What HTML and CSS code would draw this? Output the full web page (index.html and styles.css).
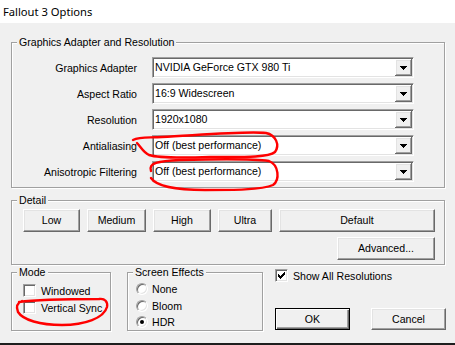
FILE: index.html
```html
<!DOCTYPE html>
<html>
<head>
<meta charset="utf-8">
<title>Fallout 3 Options</title>
<link rel="stylesheet" href="styles.css">
</head>
<body>
<div class="window">
  <div class="titlebar">Fallout 3 Options</div>
  <div class="client">
    <fieldset class="group gfx">
      <legend>Graphics Adapter and Resolution</legend>
      <div class="form">
        <div class="lbl">Graphics Adapter</div>
        <div class="combo focus"><span class="val">NVIDIA GeForce GTX 980 Ti</span><span class="drop"><svg width="7" height="4" viewBox="0 0 7 4"><path d="M0 0h7v1h-1v1h-1v1h-1v1h-1v-1h-1v-1h-1v-1h-1z" fill="#000"/></svg></span></div>
        <div class="lbl">Aspect Ratio</div>
        <div class="combo"><span class="val">16:9 Widescreen</span><span class="drop"><svg width="7" height="4" viewBox="0 0 7 4"><path d="M0 0h7v1h-1v1h-1v1h-1v1h-1v-1h-1v-1h-1v-1h-1z" fill="#000"/></svg></span></div>
        <div class="lbl">Resolution</div>
        <div class="combo"><span class="val">1920x1080</span><span class="drop"><svg width="7" height="4" viewBox="0 0 7 4"><path d="M0 0h7v1h-1v1h-1v1h-1v1h-1v-1h-1v-1h-1v-1h-1z" fill="#000"/></svg></span></div>
        <div class="lbl">Antialiasing</div>
        <div class="combo"><span class="val">Off (best performance)</span><span class="drop"><svg width="7" height="4" viewBox="0 0 7 4"><path d="M0 0h7v1h-1v1h-1v1h-1v1h-1v-1h-1v-1h-1v-1h-1z" fill="#000"/></svg></span></div>
        <div class="lbl">Anisotropic Filtering</div>
        <div class="combo"><span class="val">Off (best performance)</span><span class="drop"><svg width="7" height="4" viewBox="0 0 7 4"><path d="M0 0h7v1h-1v1h-1v1h-1v1h-1v-1h-1v-1h-1v-1h-1z" fill="#000"/></svg></span></div>
      </div>
    </fieldset>

    <fieldset class="group detail">
      <legend>Detail</legend>
      <div class="detail-body">
        <div class="presets">
          <div class="btn w-low">Low</div>
          <div class="btn w-med">Medium</div>
          <div class="btn w-high">High</div>
          <div class="btn w-ultra">Ultra</div>
          <div class="btn w-default">Default</div>
        </div>
        <div class="adv-row">
          <div class="btn w-adv">Advanced...</div>
        </div>
      </div>
    </fieldset>

    <div class="bottom">
      <fieldset class="group mode">
        <legend>Mode</legend>
        <div class="mode-body">
          <div class="check-row"><span class="checkbox"></span><span>Windowed</span></div>
          <div class="check-row"><span class="checkbox"></span><span>Vertical Sync</span></div>
        </div>
      </fieldset>

      <fieldset class="group effects">
        <legend>Screen Effects</legend>
        <div class="effects-body">
          <div class="radio-row"><span class="radio"></span><span>None</span></div>
          <div class="radio-row"><span class="radio"></span><span>Bloom</span></div>
          <div class="radio-row"><span class="radio on"></span><span>HDR</span></div>
        </div>
      </fieldset>

      <div class="side">
        <div class="check-row show-all"><span class="checkbox"><svg width="7" height="7" viewBox="0 0 7 7"><path d="M0 2h1v1h1v1h1v-1h1v-1h1v-1h1v-1h1v3h-1v1h-1v1h-1v1h-1v1h-1v-1h-1v-1h-1v-1h-1z" fill="#000"/></svg></span><span>Show All Resolutions</span></div>
        <div class="actions">
          <div class="btn default-btn w-ok">OK</div>
          <div class="btn w-ok">Cancel</div>
        </div>
      </div>
    </div>
  </div>
  <div class="strip"></div>

  <svg class="marks" width="455" height="345" viewBox="0 0 455 345">
    <path d="M133,140 C140,136 150,138 162,137 C200,135 245,131 266,133 C276,135 280,145 275,152 C268,158 240,157 210,157 C180,158 158,158 149,155 C143,152 141,147 137,143" />
    <path d="M151,171 C148,163 158,161 180,160 C220,159 255,159 269,161 C279,165 280,180 273,185 C262,190 232,190 205,190 C178,190 157,187 151,178" />
    <path d="M19,302 C40,299 78,299 99,299 C105,298 108,302 107,307 C104,318 85,325 62,325 C40,325 23,320 18,312 C16,307 17,303 22,301" />
  </svg>
</div>
</body>
</html>
```

FILE: styles.css
```css
* { box-sizing: border-box; }

html, body {
  margin: 0;
  padding: 0;
}

body {
  width: 455px;
  height: 345px;
  overflow: hidden;
  background: #f0f0f0;
  font-family: "Liberation Sans", Arial, sans-serif;
  font-size: 10.6px;
  color: #000;
}

.window {
  position: relative;
  height: 345px;
  display: flex;
  flex-direction: column;
}

.titlebar {
  height: 23px;
  background: #fff;
  font-family: "Noto Sans", sans-serif;
  font-size: 11.2px;
  line-height: 23px;
  padding-left: 3px;
}

.client {
  flex: 1;
  padding: 13px 0 0 11px;
}

.strip {
  height: 2px;
  background: #1e1e1e;
}

/* group boxes */
.group {
  margin: 0;
  padding: 0;
  min-width: 0;
  border: 1px solid #a0a0a0;
  box-shadow: 1px 1px 0 #fff, inset 1px 1px 0 #fff;
}

.group legend {
  margin-left: 5px;
  padding: 0 2px;
  line-height: 13px;
  background: #f0f0f0;
}

.gfx { width: 434px; }

.form {
  display: grid;
  grid-template-columns: 125px 262px;
  grid-auto-rows: 21px;
  column-gap: 15px;
  row-gap: 5px;
  align-items: center;
  padding: 8px 0 5px 0;
}

.lbl {
  text-align: right;
  white-space: nowrap;
}

.combo {
  height: 21px;
  display: flex;
  align-items: stretch;
  background: #fff;
  border: 1px solid;
  border-color: #a0a0a0 #fff #fff #a0a0a0;
  box-shadow: inset 1px 1px 0 #696969, inset -1px -1px 0 #e3e3e3;
}

.combo .val {
  flex: 1;
  padding-left: 2px;
  line-height: 19px;
  white-space: nowrap;
  overflow: hidden;
}

.combo .drop {
  width: 17px;
  margin: 1px 1px 1px 0;
  background: #f0f0f0;
  display: flex;
  align-items: center;
  justify-content: center;
  box-shadow: inset -1px -1px 0 #696969, inset 1px 1px 0 #fff, inset -2px -2px 0 #a0a0a0, inset 2px 2px 0 #e3e3e3;
}

.combo .drop svg { display: block; shape-rendering: crispEdges; }

/* detail */
.detail {
  width: 434px;
  margin-top: 6px;
}

.detail-body {
  padding: 2px 9px 4px 11px;
  display: flex;
  flex-direction: column;
  gap: 5px;
}

.presets {
  display: flex;
  gap: 7px;
}

.adv-row {
  display: flex;
  justify-content: flex-end;
}

.btn {
  height: 23px;
  line-height: 21px;
  text-align: center;
  background: #f0f0f0;
  border: 1px solid;
  border-color: #fff #696969 #696969 #fff;
  box-shadow: inset -1px -1px 0 #a0a0a0, inset 1px 1px 0 #e3e3e3;
  white-space: nowrap;
}

.w-low { width: 57px; }
.w-med { width: 59px; }
.w-high { width: 58px; }
.w-ultra { width: 54px; }
.w-default { flex: 1; }
.w-adv { width: 98px; }
.w-ok { width: 75px; height: 22px; line-height: 20px; }

.default-btn {
  border-color: #000;
  box-shadow: inset 1px 1px 0 #fff, inset -1px -1px 0 #696969, inset -2px -2px 0 #a0a0a0;
}

/* bottom area */
.bottom {
  margin-top: 1px;
  display: flex;
  align-items: flex-start;
}

.mode { width: 100px; height: 65px; }

.mode-body {
  padding: 3px 0 0 11px;
}

.check-row {
  height: 17px;
  display: flex;
  align-items: center;
  gap: 5px;
  white-space: nowrap;
}

.checkbox {
  width: 13px;
  height: 13px;
  flex: none;
  background: #fff;
  border: 1px solid;
  border-color: #a0a0a0 #fff #fff #a0a0a0;
  box-shadow: inset 1px 1px 0 #696969, inset -1px -1px 0 #e3e3e3;
  display: flex;
  align-items: center;
  justify-content: center;
}

.checkbox svg { display: block; shape-rendering: crispEdges; }

.effects {
  width: 136px;
  height: 65px;
  margin-left: 16px;
}

.effects-body {
  padding: 2px 0 0 8px;
}

.radio-row {
  height: 16.5px;
  display: flex;
  align-items: center;
  gap: 4px;
}

.radio {
  width: 12px;
  height: 12px;
  flex: none;
  border-radius: 50%;
  background: #fff;
  border: 1px solid;
  border-color: #a0a0a0 #fff #fff #a0a0a0;
  box-shadow: inset 1px 1px 0 #696969, inset -1px -1px 0 #e3e3e3;
  position: relative;
}

.radio.on::after {
  content: "";
  position: absolute;
  left: 3px;
  top: 3px;
  width: 4px;
  height: 4px;
  border-radius: 50%;
  background: #000;
}

.side {
  margin-left: 12px;
  padding-top: 1px;
}

.actions {
  display: flex;
  gap: 21px;
  margin-top: 24px;
}

/* annotations */
.marks {
  position: absolute;
  left: 0;
  top: 0;
  pointer-events: none;
}

.marks path {
  fill: none;
  stroke: #f00;
  stroke-width: 2.4;
  stroke-linecap: round;
  stroke-linejoin: round;
}
```
